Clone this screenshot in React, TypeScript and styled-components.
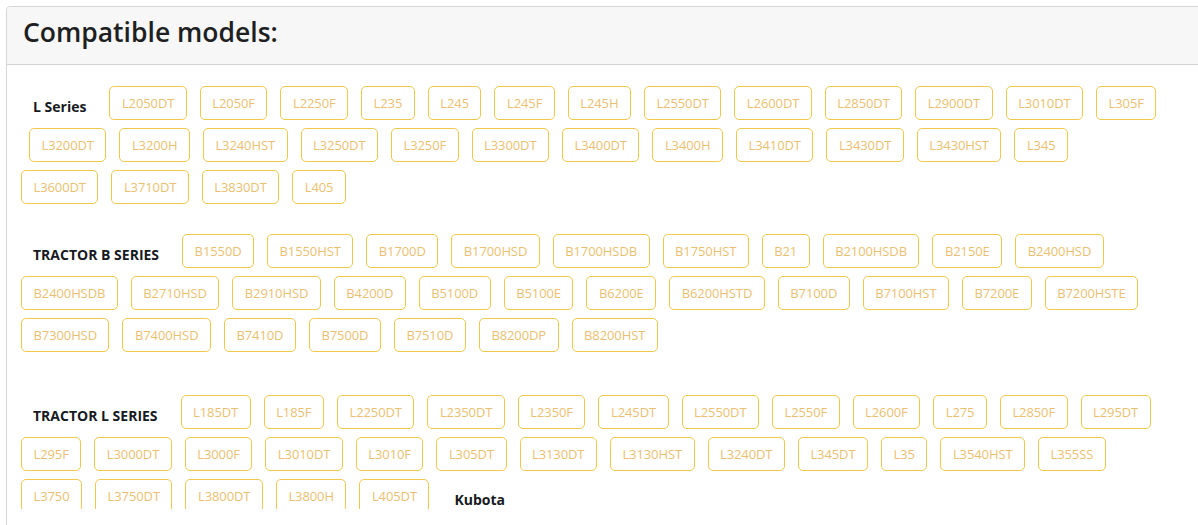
import { FC } from "react";
import styled, { createGlobalStyle } from "styled-components";

type Row = { label?: string; indent?: number; models: string[]; trailing?: string };
type Section = { gap: number; rows: Row[] };

const sections: Section[] = [
  {
    gap: 0,
    rows: [
      {
        label: "L Series",
        models: ["L2050DT", "L2050F", "L2250F", "L235", "L245", "L245F", "L245H", "L2550DT", "L2600DT", "L2850DT", "L2900DT", "L3010DT", "L305F"],
      },
      {
        indent: 8,
        models: ["L3200DT", "L3200H", "L3240HST", "L3250DT", "L3250F", "L3300DT", "L3400DT", "L3400H", "L3410DT", "L3430DT", "L3430HST", "L345"],
      },
      { models: ["L3600DT", "L3710DT", "L3830DT", "L405"] },
    ],
  },
  {
    gap: 30,
    rows: [
      {
        label: "TRACTOR B SERIES",
        models: ["B1550D", "B1550HST", "B1700D", "B1700HSD", "B1700HSDB", "B1750HST", "B21", "B2100HSDB", "B2150E", "B2400HSD"],
      },
      {
        models: ["B2400HSDB", "B2710HSD", "B2910HSD", "B4200D", "B5100D", "B5100E", "B6200E", "B6200HSTD", "B7100D", "B7100HST", "B7200E", "B7200HSTE"],
      },
      { models: ["B7300HSD", "B7400HSD", "B7410D", "B7500D", "B7510D", "B8200DP", "B8200HST"] },
    ],
  },
  {
    gap: 43,
    rows: [
      {
        label: "TRACTOR L SERIES",
        models: ["L185DT", "L185F", "L2250DT", "L2350DT", "L2350F", "L245DT", "L2550DT", "L2550F", "L2600F", "L275", "L2850F", "L295DT"],
      },
      {
        models: ["L295F", "L3000DT", "L3000F", "L3010DT", "L3010F", "L305DT", "L3130DT", "L3130HST", "L3240DT", "L345DT", "L35", "L3540HST", "L355SS"],
      },
      { models: ["L3750", "L3750DT", "L3800DT", "L3800H", "L405DT"], trailing: "Kubota" },
    ],
  },
];

const App: FC = () => {
  return (
    <>
      <GlobalStyle />
      <Card>
        <CardHeader>
          <Title>Compatible models:</Title>
        </CardHeader>
        <CardBody>
          {sections.map((section, i) => (
            <SeriesBlock key={i} $gap={section.gap}>
              {section.rows.map((row, j) => (
                <ModelRow key={j} $indent={row.indent ?? 0}>
                  {row.label && <SeriesLabel>{row.label}</SeriesLabel>}
                  {row.models.map((m) => (
                    <ModelChip key={m} href="#">
                      {m}
                    </ModelChip>
                  ))}
                  {row.trailing && <SeriesLabel>{row.trailing}</SeriesLabel>}
                </ModelRow>
              ))}
            </SeriesBlock>
          ))}
        </CardBody>
      </Card>
    </>
  );
};

export default App;

const GlobalStyle = createGlobalStyle`
  html, body {
    margin: 0;
    background: #ffffff;
    overflow: hidden;
    font-family: "Open Sans", "Segoe UI", sans-serif;
  }
`;

const Card = styled.div`
  margin: 6px 0 0 6px;
  width: 1240px;
  height: 560px;
  border: 1px solid #d6d6d6;
  border-radius: 4px;
  background: #ffffff;
`;

const CardHeader = styled.div`
  height: 58px;
  box-sizing: border-box;
  display: flex;
  align-items: center;
  padding: 0 16px 6px;
  background: #f7f7f7;
  border-bottom: 1px solid #d3d3d3;
  border-radius: 4px 4px 0 0;
`;

const Title = styled.h2`
  margin: 0;
  font-size: 26.5px;
  font-weight: 600;
  color: #1d1f22;
  line-height: 1;
`;

const CardBody = styled.div`
  height: 444px;
  overflow: hidden;
  padding: 21px 0 0 14px;
  box-sizing: border-box;
`;

const SeriesBlock = styled.div<{ $gap: number }>`
  display: flex;
  flex-direction: column;
  gap: 8px;
  margin-top: ${(p) => p.$gap}px;
`;

const ModelRow = styled.div<{ $indent: number }>`
  display: flex;
  align-items: center;
  gap: 13px;
  padding-left: ${(p) => p.$indent}px;
`;

const SeriesLabel = styled.span`
  padding: 7px 10px 0 12px;
  font-size: 14px;
  font-weight: 700;
  color: #161a22;
  white-space: nowrap;
`;

const ModelChip = styled.a`
  height: 34px;
  box-sizing: border-box;
  display: inline-flex;
  align-items: center;
  padding: 0 11.5px;
  border: 1px solid #f0c84c;
  border-radius: 5px;
  font-size: 13px;
  letter-spacing: -0.1px;
  color: #ebbf72;
  text-decoration: none;
  white-space: nowrap;
`;
